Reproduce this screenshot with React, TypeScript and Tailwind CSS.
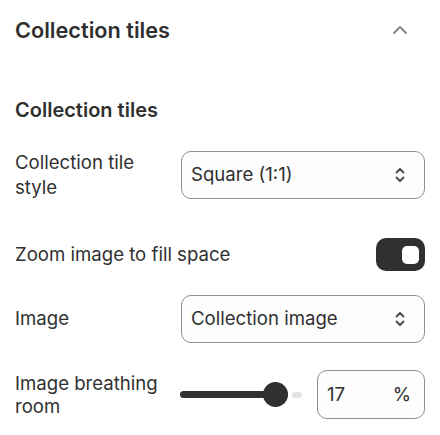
import React from "react";

const Chevrons = () => (
  <svg width="12" height="20" viewBox="0 0 12 20" fill="none" stroke="#4a4a4a" strokeWidth="1.8" strokeLinecap="round" strokeLinejoin="round">
    <path d="M2.5 7.5 L6 4 L9.5 7.5" />
    <path d="M2.5 12.5 L6 16 L9.5 12.5" />
  </svg>
);

const Select = ({ value }: { value: string }) => (
  <div className="flex-1 h-[48px] rounded-[10px] border border-[#8f8f8f] bg-[#fdfdfd] flex items-center justify-between pl-[9px] pr-[18px]">
    <span className="text-[18.6px] text-[#303030]">{value}</span>
    <Chevrons />
  </div>
);

export default function App() {
  return (
    <div className="w-[440px] h-[435px] bg-white px-[15px] text-[#303030]" style={{ fontFamily: "Inter, 'Noto Sans', sans-serif" }}>
      <div className="h-[60px] flex items-center justify-between">
        <span className="text-[21.7px] font-semibold">Collection tiles</span>
        <svg className="mr-[17px]" width="16" height="10" viewBox="0 0 16 10" fill="none" stroke="#8a8a8a" strokeWidth="2" strokeLinecap="round" strokeLinejoin="round">
          <path d="M2 8 L8 2 L14 8" />
        </svg>
      </div>
      <div className="mt-[37px] h-[26px] flex items-center text-[20px] font-semibold">Collection tiles</div>
      <div className="mt-[27px] flex items-center">
        <div className="w-[166px] text-[18.6px] leading-[25px]">Collection tile<br />style</div>
        <Select value="Square (1:1)" />
      </div>
      <div className="mt-[38px] flex items-center justify-between">
        <span className="text-[18.6px]">Zoom image to fill space</span>
        <div className="w-[49px] h-[33px] rounded-[10px] bg-[#303030] flex items-center justify-end pr-[6px]">
          <div className="w-[17px] h-[18px] rounded-[5px] bg-white" />
        </div>
      </div>
      <div className="mt-[24px] flex items-center">
        <div className="w-[166px] text-[18.6px]">Image</div>
        <Select value="Collection image" />
      </div>
      <div className="mt-[27px] flex items-center">
        <div className="w-[165px] text-[18.6px] leading-[23px]">Image breathing<br />room</div>
        <div className="w-[124px] relative h-[26px] flex items-center">
          <div className="h-[7px] w-[108px] rounded-full bg-[#303030]" />
          <div className="ml-[4px] h-[6px] w-[10px] rounded-full bg-[#e3e3e3]" />
          <div className="absolute left-[83px] top-[0px] w-[25px] h-[25px] rounded-full bg-[#303030]" />
        </div>
        <div className="ml-[13px] flex-1 h-[49px] rounded-[10px] border border-[#8f8f8f] bg-[#fdfdfd] flex items-center justify-between pl-[9px] pr-[13px]">
          <span className="text-[18.6px]">17</span>
          <span className="text-[18.6px]">%</span>
        </div>
      </div>
    </div>
  );
}
